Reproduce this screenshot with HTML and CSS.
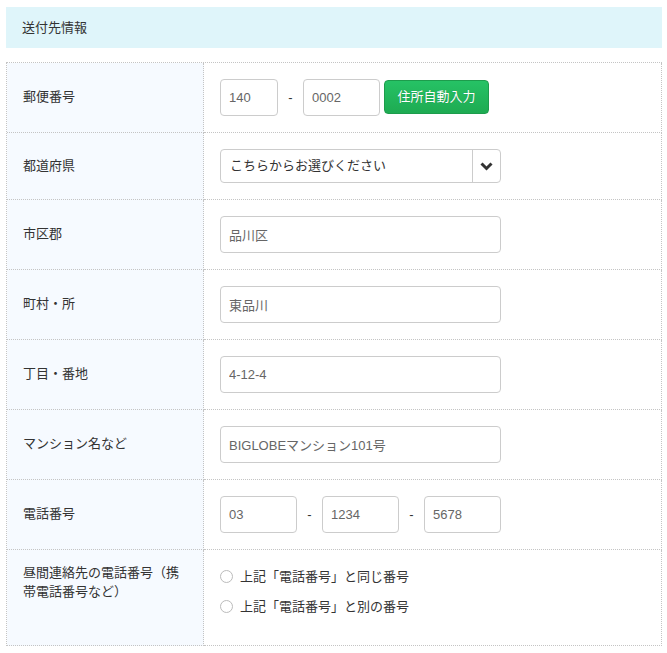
FILE: index.html
```html
<!DOCTYPE html>
<html lang="ja">
<head>
<meta charset="utf-8">
<link rel="stylesheet" href="styles.css">
</head>
<body>
<div class="page">
  <div class="section-head">送付先情報</div>
  <div class="form">
    <div class="row">
      <div class="label">郵便番号</div>
      <div class="value">
        <input class="field w-zip1" type="text" value="140">
        <span class="dash">-</span>
        <input class="field w-short" type="text" value="0002">
        <button class="btn-auto" type="button">住所自動入力</button>
      </div>
    </div>
    <div class="row">
      <div class="label">都道府県</div>
      <div class="value">
        <div class="select">
          <span class="select-text">こちらからお選びください</span>
          <span class="select-arrow">
            <svg width="13" height="9" viewBox="0 0 13 9"><path d="M1.5 1.5 L6.5 6.5 L11.5 1.5" fill="none" stroke="#333" stroke-width="3"/></svg>
          </span>
        </div>
      </div>
    </div>
    <div class="row">
      <div class="label">市区郡</div>
      <div class="value"><input class="field w-long" type="text" value="品川区"></div>
    </div>
    <div class="row">
      <div class="label">町村・所</div>
      <div class="value"><input class="field w-long" type="text" value="東品川"></div>
    </div>
    <div class="row">
      <div class="label">丁目・番地</div>
      <div class="value"><input class="field w-long" type="text" value="4-12-4"></div>
    </div>
    <div class="row">
      <div class="label">マンション名など</div>
      <div class="value"><input class="field w-long" type="text" value="BIGLOBEマンション101号"></div>
    </div>
    <div class="row">
      <div class="label">電話番号</div>
      <div class="value">
        <input class="field w-short" type="text" value="03">
        <span class="dash">-</span>
        <input class="field w-short" type="text" value="1234">
        <span class="dash">-</span>
        <input class="field w-short" type="text" value="5678">
      </div>
    </div>
    <div class="row row-top">
      <div class="label label-top">昼間連絡先の電話番号（携帯電話番号など）</div>
      <div class="value value-radios">
        <label class="radio"><span class="radio-dot"></span>上記「電話番号」と同じ番号</label>
        <label class="radio"><span class="radio-dot"></span>上記「電話番号」と別の番号</label>
      </div>
    </div>
  </div>
</div>
</body>
</html>
```
FILE: styles.css
```css
* { box-sizing: border-box; }
body {
  margin: 0;
  font-family: "Liberation Sans", "Noto Sans CJK JP", sans-serif;
  font-size: 13px;
  color: #333;
  background: #fff;
}
.page {
  padding: 7px 5px 0 6px;
}
.section-head {
  width: 656px;
  height: 41px;
  background: #dff5fa;
  padding: 0 16px 2px 16px;
  display: flex;
  align-items: center;
  margin-bottom: 14px;
}
.form {
  width: 656px;
  border-top: 1px dotted #c4c4c4;
  border-left: 1px dotted #c4c4c4;
}
.row {
  display: grid;
  grid-template-columns: 197px 458px;
}
.label, .value {
  border-bottom: 1px dotted #c4c4c4;
  border-right: 1px dotted #c4c4c4;
}
.label {
  background: #f6faff;
  padding: 0 16px 2px 16px;
  display: flex;
  align-items: center;
  line-height: 19px;
}
.value {
  padding: 16px;
  display: flex;
  align-items: center;
}
.field {
  height: 37px;
  border: 1px solid #ccc;
  border-radius: 4px;
  padding: 0 8px 1px 8px;
  font-family: "Liberation Sans", "Noto Sans CJK JP", sans-serif;
  font-size: 13px;
  color: #666;
  background: #fff;
  outline: none;
}
.w-zip1 { width: 58px; }
.w-short { width: 77px; }
.w-long { width: 281px; }
.dash {
  width: 25px;
  text-align: center;
  color: #333;
}
.btn-auto {
  margin-left: 4px;
  height: 34px;
  width: 105px;
  border: 1px solid #1d9c4c;
  border-radius: 4px;
  background: linear-gradient(#26c265, #1eab52);
  color: #fff;
  font-family: "Noto Sans CJK JP", sans-serif;
  font-size: 13px;
  text-shadow: 0 0 1px rgba(0,0,0,0.25);
  padding: 0 0 2px 0;
  margin-bottom: 2px;
}
.select {
  width: 281px;
  height: 34px;
  border: 1px solid #ccc;
  border-radius: 4px;
  display: flex;
  align-items: center;
  background: #fff;
}
.select-text {
  flex: 1;
  padding-left: 9px;
  padding-bottom: 3px;
  color: #333;
  font-family: "Noto Sans CJK JP", sans-serif;
}
.select-arrow {
  width: 28px;
  height: 100%;
  border-left: 1px solid #ccc;
  display: flex;
  align-items: center;
  justify-content: center;
}
.label-top {
  align-items: flex-start;
  padding-top: 13px;
}
.value-radios {
  flex-direction: column;
  align-items: flex-start;
  padding: 10px 16px 25px 16px;
}
.radio {
  display: flex;
  align-items: center;
  height: 30px;
  color: #333;
}
.radio-dot {
  width: 13px;
  height: 13px;
  border: 1px solid #bbb;
  border-radius: 50%;
  background: #fff;
  margin: 2px 7px 0 0;
}
```
